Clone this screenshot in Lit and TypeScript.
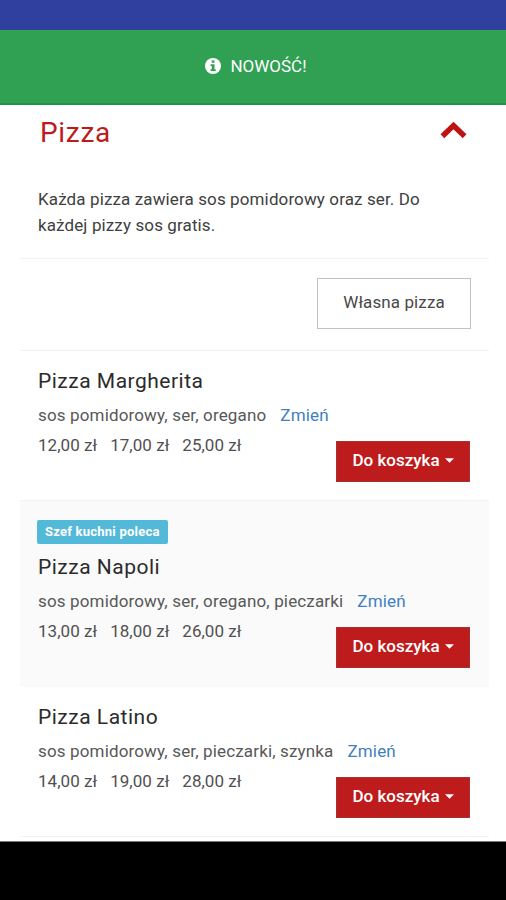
import { LitElement, html, css, nothing } from "lit";
import { customElement, property } from "lit/decorators.js";

interface Pizza {
  name: string;
  toppings: string;
  prices: string[];
  badge?: string;
}

const MENU: Pizza[] = [
  { name: "Pizza Margherita", toppings: "sos pomidorowy, ser, oregano", prices: ["12,00 zł", "17,00 zł", "25,00 zł"] },
  { name: "Pizza Napoli", toppings: "sos pomidorowy, ser, oregano, pieczarki", prices: ["13,00 zł", "18,00 zł", "26,00 zł"], badge: "Szef kuchni poleca" },
  { name: "Pizza Latino", toppings: "sos pomidorowy, ser, pieczarki, szynka", prices: ["14,00 zł", "19,00 zł", "28,00 zł"] },
];

@customElement("pizza-row")
class PizzaRow extends LitElement {
  @property({ attribute: false }) pizza!: Pizza;

  static styles = css`
    :host { display: block; }
    .row { box-sizing: border-box; padding: 15px 19px 18px 18px; border-bottom: 1px solid #f3f3f3; white-space: nowrap; }
    .featured { background: #fafafa; padding-top: 19px; border-color: #fafafa; }
    .badge { display: block; width: fit-content; box-sizing: border-box; height: 24px; padding: 0 8px; margin: 0 0 8px -1px; border-radius: 2px; background: #53b9d9; color: #fff; font-size: 13px; font-weight: 700; line-height: 24px; letter-spacing: 0.23px; }
    .name { margin: 0 0 4px; font-size: 21px; font-weight: 400; line-height: 30px; letter-spacing: 0.5px; color: #2b2b2b; }
    .toppings { display: flex; gap: 14px; font-size: 17px; line-height: 30px; letter-spacing: 0.15px; color: #585858; }
    .change { color: #3f80c2; text-decoration: none; }
    .foot { display: flex; justify-content: space-between; align-items: flex-start; }
    .prices { display: flex; gap: 13px; font-size: 17px; line-height: 30px; letter-spacing: 0.04px; color: #505050; }
    .cart { display: flex; align-items: center; justify-content: center; gap: 5px; box-sizing: border-box; width: 134px; height: 41px; margin: 11px 0 0; padding: 0 0 3px; border: 1px solid #a93030; border-radius: 0; background: #be1b1c; color: #fff; font: 500 17px Roboto, sans-serif; }
    .caret { width: 9px; height: 5px; fill: #fff; }
  `;

  render() {
    const p = this.pizza;
    return html`
      <article class="row ${p.badge ? "featured" : ""}">
        ${p.badge ? html`<span class="badge">${p.badge}</span>` : nothing}
        <h3 class="name">${p.name}</h3>
        <div class="toppings"><span>${p.toppings}</span><a class="change">Zmień</a></div>
        <div class="foot">
          <div class="prices">${p.prices.map((x) => html`<span>${x}</span>`)}</div>
          <button class="cart">Do koszyka<svg class="caret" viewBox="0 0 10 5"><path d="M0 0h10L5 5z" /></svg></button>
        </div>
      </article>
    `;
  }
}

@customElement("app-root")
class AppRoot extends LitElement {
  static styles = css`
    :host { display: flex; flex-direction: column; box-sizing: border-box; height: 900px; overflow: hidden; background: #fff; font-family: Roboto, sans-serif; }
    .status { flex: none; height: 30px; background: #2f409f; }
    .banner { flex: none; box-sizing: border-box; height: 75px; padding: 0 0 1px 6px; border-bottom: 2px solid #1c9545; background: #30a052; color: #fff; display: flex; align-items: center; justify-content: center; gap: 9px; font-size: 17px; }
    .info { width: 16px; height: 16px; }
    .menu { flex: none; height: 736px; box-sizing: border-box; padding: 0 17px 0 20px; }
    .head { display: flex; justify-content: space-between; align-items: center; height: 54px; padding: 0 22px 0 20px; }
    .title { margin: 0; font-size: 28px; font-weight: 400; letter-spacing: 0.7px; color: #bd1a1c; }
    .chevron { width: 27px; height: 18px; margin-top: -5px; fill: none; stroke: #bd1313; stroke-width: 5.4; stroke-linejoin: miter; }
    .intro { box-sizing: border-box; height: 100px; margin: 0; padding: 27px 18px 0; font-size: 17px; line-height: 26px; letter-spacing: 0.12px; color: #404040; border-bottom: 1px solid #f3f3f3; }
    .custom { box-sizing: border-box; height: 92px; display: flex; justify-content: flex-end; padding: 19px 18px 0; border-bottom: 1px solid #f3f3f3; }
    .own { box-sizing: border-box; width: 154px; height: 51px; padding: 0 0 3px; border: 1px solid #c2c2c2; border-radius: 0; background: #fff; color: #484848; font: 400 17px Roboto, sans-serif; letter-spacing: 0.1px; }
    .nav { flex: 1; border-top: 1px solid #777; background: #000; }
  `;

  render() {
    return html`
      <div class="status"></div>
      <div class="banner">
        <svg class="info" viewBox="0 0 16 16"><circle cx="8" cy="8" r="8" fill="#fff" /><path d="M6.7 2.5h2.8v2.3H6.7zM5.6 6.3h3.9v5h1.2v1.8H5.6v-1.8h1.2V8.1H5.6z" fill="#30a052" /></svg>
        <span>NOWOŚĆ!</span>
      </div>
      <main class="menu">
        <header class="head">
          <h1 class="title">Pizza</h1>
          <svg class="chevron" viewBox="0 0 27 18"><path d="M2.4 15.2 13.5 4.6l11.1 10.6" /></svg>
        </header>
        <p class="intro">Każda pizza zawiera sos pomidorowy oraz ser. Do<br />każdej pizzy sos gratis.</p>
        <div class="custom"><button class="own">Własna pizza</button></div>
        ${MENU.map((p) => html`<pizza-row .pizza=${p}></pizza-row>`)}
      </main>
      <footer class="nav"></footer>
    `;
  }
}
